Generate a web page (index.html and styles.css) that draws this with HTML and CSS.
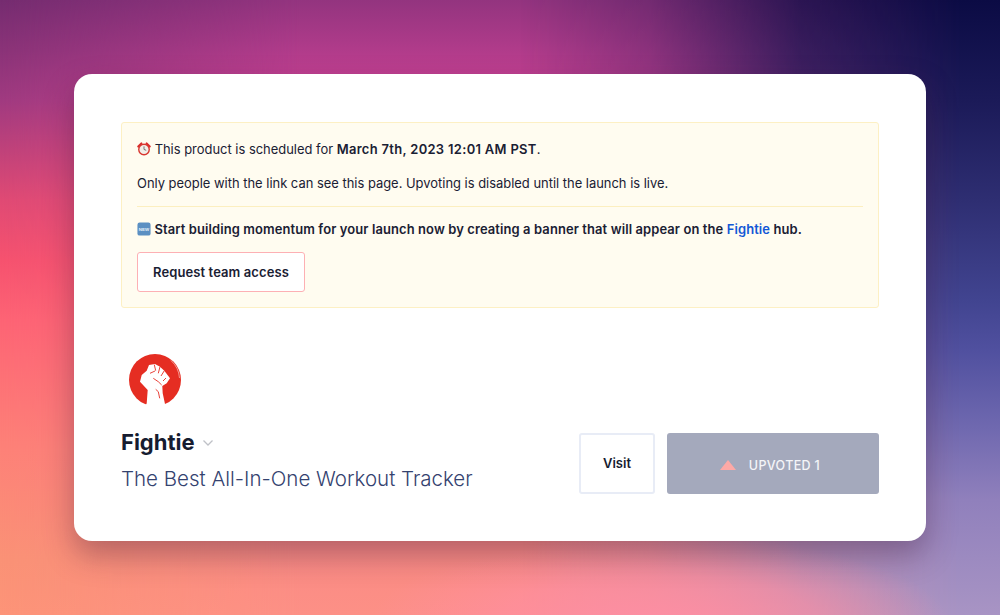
FILE: index.html
```html
<!DOCTYPE html>
<html lang="en">
<head>
<meta charset="utf-8">
<title>Fightie</title>
<link rel="stylesheet" href="styles.css">
</head>
<body>
<div class="glow"></div>
<main class="card">
  <section class="notice">
    <p class="line first"><svg class="emoji" viewBox="0 0 16 16" aria-hidden="true"><path d="M1.500 5.200 5 1.700M14.500 5.200 11 1.700" stroke="#d92b2b" stroke-width="2.400" stroke-linecap="round"/><circle cx="8" cy="8.500" r="6" fill="#f2eee8" stroke="#d8362f" stroke-width="1.600"/><path d="M8 5v3.500l2.500 1" fill="none" stroke="#666" stroke-width="1"/></svg> This product is scheduled for <b class="date">March 7th, 2023 12:01 AM PST</b>.</p>
    <p class="line second">Only people with the link can see this page. Upvoting is disabled until the launch is live.</p>
    <hr class="rule">
    <p class="line third"><b class="lead"><svg class="emoji" viewBox="0 0 16 16" aria-hidden="true"><rect x=".5" y=".5" width="15" height="15" rx="2.500" fill="#5b8fc2"/><text class="new" x="8" y="10" text-anchor="middle">NEW</text></svg> Start building momentum for your launch now by creating a banner that will appear on the <a class="link" href="#">Fightie</a> hub.</b></p>
    <a class="request" href="#">Request team access</a>
  </section>
  <section class="product">
    <div class="info">
      <svg class="logo" viewBox="0 0 52 52" aria-hidden="true">
        <circle cx="26" cy="26" r="26" fill="#e52d22"/>
        <path d="M42 6.500A26 26 0 0 1 50.500 24" fill="none" stroke="#f6a59c" stroke-width=".9"/>
        <path d="M16.500 52 17.700 49.300 18.700 36 11 27.700 12.700 21 17.700 16.700 20 11 26 10 31 12.700 35.300 16.700 41 24.300 37.700 29.300 33.300 32 33.700 39.300 36 50 36.500 52Z" fill="#fff"/>
        <path d="M25.300 10.700 26.700 16.700M31 12.700 29.300 19.300M35.300 16.700 32 22M37 24 34 27M21 19.300 26 17M24.300 24.300 29.300 27.700 32.700 31M26.700 35.300 29.300 37.700 30.700 44.300" fill="none" stroke="#e52d22" stroke-width=".9"/>
      </svg>
      <h1 class="name">Fightie <svg class="chev" viewBox="0 0 12 8" aria-hidden="true"><path d="M1.500 1.500 6 6l4.500-4.500" fill="none" stroke="#bfc1c7" stroke-width="1.300"/></svg></h1>
      <p class="tagline">The Best All-In-One Workout Tracker</p>
    </div>
    <div class="actions">
      <a class="visit" href="#">Visit</a>
      <div class="upvote"><span class="tri"></span><span>UPVOTED 1</span></div>
    </div>
  </section>
</main>
</body>
</html>
```
FILE: styles.css
```css
* { box-sizing: border-box; }
html, body { height: 100%; }
body {
  position: relative;
  margin: 0;
  padding: 74px;
  overflow: hidden;
  font-family: Inter, "Liberation Sans", sans-serif;
  color: #1a2033;
  background: linear-gradient(180deg, #752c70 0, #a03a80 100px, #e04a74 200px, #f6526f 260px, #fd6475 320px, #fd8278 450px, #fa9276 560px, #fd9478 615px);
}
body::before,
body::after {
  content: "";
  position: absolute;
  inset: 0;
}
body::before {
  background: linear-gradient(180deg, #93347f 0, #bf3f90 75px, #fb5f78 300px, #fa8a84 550px, #fd9086 615px);
  -webkit-mask-image: linear-gradient(90deg, transparent 0, #000 300px);
  mask-image: linear-gradient(90deg, transparent 0, #000 300px);
}
body::after {
  background: linear-gradient(180deg, #0b0b44 0, #1b1a58 100px, #2e2e72 200px, #414490 300px, #50509f 350px, #6c66ae 420px, #9080bc 500px, #a894c4 615px);
  -webkit-mask-image: linear-gradient(90deg, transparent 520px, rgba(0,0,0,.24) 650px, rgba(0,0,0,.76) 800px, #000 960px);
  mask-image: linear-gradient(90deg, transparent 520px, rgba(0,0,0,.24) 650px, rgba(0,0,0,.76) 800px, #000 960px);
}
.glow {
  position: absolute;
  inset: 0;
  z-index: 1;
  background: radial-gradient(290px 90px at 660px 625px, rgba(255, 142, 164, .95) 0%, rgba(255, 142, 164, .6) 55%, rgba(255, 142, 164, 0) 100%);
}
.card {
  position: relative;
  z-index: 2;
  width: 852px;
  height: 467px;
  padding: 48px 47px;
  background: #fff;
  border-radius: 18px;
  box-shadow: 0 14px 30px rgba(50, 20, 50, .34);
}
.notice {
  height: 186px;
  padding: 15px 15px 15px;
  background: #fffcf0;
  border: 1px solid #fdf0c4;
  border-radius: 3px;
  font-size: 12.930px;
  line-height: 22px;
}
.line { margin: 0; }
b { font-weight: 600; }
.date { letter-spacing: .33px; }
.lead { letter-spacing: .12px; }
.second { margin-top: 12px; }
.third { margin-top: 11px; }
.rule { height: 1px; margin: 12px 0 0; border: 0; background: #fcefc0; }
.emoji { width: 14px; height: 14px; vertical-align: -2px; }
.new { font-family: "Liberation Sans", sans-serif; font-size: 5px; font-weight: 700; fill: #eaf2fa; }
.link { color: #1257d6; text-decoration: none; }
.request {
  display: flex;
  align-items: center;
  justify-content: center;
  width: 168px;
  height: 40px;
  margin-top: 12px;
  background: #fff;
  border: 1px solid #fdb0b4;
  border-radius: 3px;
  color: #1a2033;
  font-weight: 600;
  font-size: 13px;
  letter-spacing: .1px;
  text-decoration: none;
}
.product {
  display: flex;
  justify-content: space-between;
  align-items: flex-end;
  margin-top: 46px;
}
.info { padding-bottom: 1px; }
.logo { display: block; width: 52px; height: 52px; margin-left: 8px; }
.name {
  display: flex;
  align-items: center;
  gap: 7px;
  margin: 22px 0 0;
  font-size: 22px;
  line-height: 28px;
  font-weight: 700;
  color: #161c30;
}
.chev { width: 12px; height: 8px; margin-top: 2px; }
.tagline {
  margin: 9px 0 0;
  font-size: 20.500px;
  line-height: 28px;
  font-weight: 300;
  color: #34426f;
}
.actions { display: flex; gap: 12px; }
.visit {
  display: flex;
  align-items: center;
  justify-content: center;
  width: 76px;
  height: 61px;
  padding-bottom: 2px;
  border: 2px solid #e8ecf6;
  border-radius: 3px;
  color: #161c30;
  font-weight: 600;
  font-size: 13px;
  text-decoration: none;
}
.upvote {
  display: flex;
  align-items: center;
  justify-content: center;
  gap: 13px;
  width: 212px;
  height: 61px;
  padding: 4px 6px 0 0;
  background: #a4a9bc;
  border-radius: 3px;
  color: #f4f5f8;
  font-weight: 500;
  font-size: 12.500px;
  letter-spacing: .35px;
}
.tri {
  width: 0;
  height: 0;
  margin-bottom: 2px;
  border-left: 8px solid transparent;
  border-right: 8px solid transparent;
  border-bottom: 10px solid #fda9a6;
}
```
